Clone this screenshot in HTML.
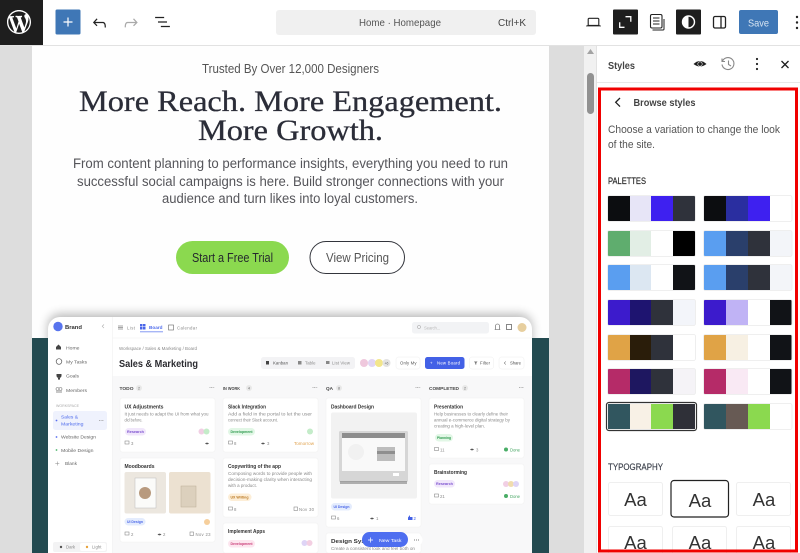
<!DOCTYPE html>
<html><head><meta charset="utf-8"><title>Browse styles</title>
<style>
html,body{margin:0;padding:0;background:#fff;overflow:hidden}
svg{display:block}
text{font-family:"Liberation Sans",sans-serif}
.serif{font-family:"Liberation Serif",serif}
.t{font-size:4.6px;fill:#666}
.d{font-size:4.3px;fill:#8a8a8a}
.b{font-size:5.4px;font-weight:bold;fill:#333}
.tag{font-size:3.8px;font-weight:bold}
.card{fill:#fff;stroke:#f0f0f0;stroke-width:.5}
</style></head><body>
<svg width="800" height="553" viewBox="0 0 800 553" xmlns="http://www.w3.org/2000/svg">
<defs>
<filter id="bl" x="-5%" y="-5%" width="110%" height="110%" color-interpolation-filters="sRGB"><feGaussianBlur stdDeviation="0.28"/></filter>
<filter id="sh" x="-10%" y="-10%" width="120%" height="120%" color-interpolation-filters="sRGB"><feGaussianBlur stdDeviation="5"/></filter>
<filter id="all" filterUnits="userSpaceOnUse" x="0" y="0" width="800" height="553" color-interpolation-filters="sRGB"><feGaussianBlur stdDeviation="0.3"/></filter>
</defs>
<rect width="800" height="553" fill="#fff"/>
<g filter="url(#all)">
<rect width="800" height="553" fill="#fff"/>
<!-- canvas -->
<rect x="0" y="46" width="584" height="507" fill="#dddddd"/>
<rect x="32" y="46" width="517" height="507" fill="#fefefe"/>
<rect x="32" y="338" width="517" height="215" fill="#234a50"/>

<!-- hero -->
<text x="202" y="73" textLength="177" lengthAdjust="spacingAndGlyphs" font-size="12.5" fill="#555">Trusted By Over 12,000 Designers</text>
<text class="serif" x="79" y="111" textLength="423" lengthAdjust="spacingAndGlyphs" font-size="29.5" fill="#2b2d38" stroke="#2b2d38" stroke-width=".3">More Reach. More Engagement.</text>
<text class="serif" x="198" y="140" textLength="185" lengthAdjust="spacingAndGlyphs" font-size="29.5" fill="#2b2d38" stroke="#2b2d38" stroke-width=".3">More Growth.</text>
<text x="73" y="168" textLength="435" lengthAdjust="spacingAndGlyphs" font-size="14.2" fill="#55555a">From content planning to performance insights, everything you need to run</text>
<text x="77" y="186" textLength="427" lengthAdjust="spacingAndGlyphs" font-size="14.2" fill="#55555a">successful social campaigns is here. Build stronger connections with your</text>
<text x="162" y="203" textLength="256" lengthAdjust="spacingAndGlyphs" font-size="14.2" fill="#55555a">audience and turn likes into loyal customers.</text>
<rect x="176" y="241" width="113" height="33" rx="16.5" fill="#8bd94f"/>
<text x="192" y="262" textLength="81" lengthAdjust="spacingAndGlyphs" font-size="12.5" fill="#25282e">Start a Free Trial</text>
<rect x="310" y="241.5" width="94.5" height="32" rx="16" fill="#fff" stroke="#33353c" stroke-width="1"/>
<text x="326" y="262" textLength="63" lengthAdjust="spacingAndGlyphs" font-size="12.5" fill="#555">View Pricing</text>

<!-- app -->
<rect x="48" y="317" width="484" height="260" rx="12" fill="#000" opacity=".28" filter="url(#sh)" transform="translate(0,-3)"/>
<rect x="32" y="338" width="16" height="215" fill="#234a50"/>
<rect x="532" y="338" width="17" height="215" fill="#234a50"/>
<g filter="url(#bl)">
<rect x="48" y="317" width="484" height="260" rx="12" fill="#fff"/>
<rect x="112.5" y="376" width="419.5" height="177" fill="#f8f8f9"/>
<path d="M112.5 317V553M112.5 338H532" stroke="#f0f0f0" stroke-width=".6"/>
<!-- app sidebar -->
<circle cx="58" cy="326.5" r="4.7" fill="#5874ee"/>
<text x="65" y="329" class="b" fill="#444" textLength="17" lengthAdjust="spacingAndGlyphs">Brand</text>
<path d="M104 324.5l-1.8 1.8 1.8 1.8" fill="none" stroke="#aaa" stroke-width=".6"/>
<path d="M56 347l2.5-2.5 2.5 2.5v2.5h-5z" fill="#444"/>
<text x="66" y="349.5" class="t" textLength="13.5" lengthAdjust="spacingAndGlyphs">Home</text>
<circle cx="59" cy="361.5" r="2.8" fill="none" stroke="#555" stroke-width=".7"/>
<text x="66" y="363.5" class="t" textLength="21" lengthAdjust="spacingAndGlyphs">My Tasks</text>
<path d="M56.5 374h5v2q-.5 2-2.5 2t-2.5-2z" fill="#444"/><rect x="58" y="378" width="2" height="1.6" fill="#444"/>
<text x="66" y="377.5" class="t" textLength="13" lengthAdjust="spacingAndGlyphs">Goals</text>
<circle cx="57.5" cy="389" r="1.5" fill="none" stroke="#777" stroke-width=".6"/><circle cx="60.5" cy="389" r="1.5" fill="none" stroke="#777" stroke-width=".6"/><path d="M56 392h6" stroke="#777" stroke-width=".8"/>
<text x="66" y="392" class="t" textLength="21" lengthAdjust="spacingAndGlyphs">Members</text>
<text x="56" y="407" font-size="3.3" fill="#aaa" textLength="23" lengthAdjust="spacingAndGlyphs">WORKSPACE</text>
<rect x="53" y="411" width="54" height="19" rx="2.5" fill="#eff2fd"/>
<circle cx="56.5" cy="420.5" r=".9" fill="#5a6ff0"/>
<text x="61" y="418.5" class="t" style="fill:#4f6cec" textLength="17" lengthAdjust="spacingAndGlyphs">Sales &amp;</text>
<text x="61" y="425.5" class="t" style="fill:#4f6cec" textLength="22.5" lengthAdjust="spacingAndGlyphs">Marketing</text>
<path d="M99 420.5h5" stroke="#999" stroke-width=".7" stroke-dasharray="1 .6"/>
<circle cx="56.5" cy="437" r=".9" fill="#5a6ff0"/>
<text x="61" y="438.5" class="t" textLength="35" lengthAdjust="spacingAndGlyphs">Website Design</text>
<circle cx="56.5" cy="450" r=".9" fill="#4bb56a"/>
<text x="61" y="452" class="t" textLength="32.5" lengthAdjust="spacingAndGlyphs">Mobile Design</text>
<path d="M57.3 461.5v4M55.3 463.5h4" stroke="#888" stroke-width=".5"/>
<text x="65" y="465" class="t" textLength="12" lengthAdjust="spacingAndGlyphs">Blank</text>
<rect x="53" y="542" width="54" height="10" rx="2" fill="#f3f3f4"/>
<rect x="80" y="543" width="26" height="8" rx="2" fill="#fff"/>
<circle cx="61" cy="547" r="1.2" fill="#555"/>
<text x="66" y="548.5" class="d" textLength="9">Dark</text>
<circle cx="87" cy="547" r="1.2" fill="#e8a33c"/>
<text x="92" y="548.5" class="d" textLength="9.5">Light</text>
<!-- tabs -->
<path d="M118 326h5M118 327.5h5M118 329h5" stroke="#888" stroke-width=".7"/>
<text x="127" y="329.5" class="d" textLength="8">List</text>
<rect x="140" y="324" width="5.5" height="5.5" fill="#4a66e8"/>
<path d="M142.7 324v5.5M140 326.7h5.5" stroke="#fff" stroke-width=".5"/>
<text x="149" y="329" class="t" style="fill:#4f6cec;font-weight:bold" textLength="13.5" lengthAdjust="spacingAndGlyphs">Board</text>
<rect x="140" y="331.5" width="23" height=".7" fill="#4f6cec"/>
<rect x="168.5" y="325" width="5" height="5" fill="none" stroke="#666" stroke-width=".6"/>
<text x="177" y="329.5" class="d" textLength="20">Calendar</text>
<!-- search -->
<rect x="412" y="322" width="77" height="11.5" rx="2.5" fill="#f2f3f5"/>
<circle cx="419" cy="327" r="1.6" fill="none" stroke="#999" stroke-width=".5"/>
<text x="424" y="329.5" class="d" style="fill:#bbb" textLength="16">Search...</text>
<path d="M495.5 329.5v-3.5a2 2 0 0 1 4 0v3.5zM494.7 329.5h5.6" fill="none" stroke="#555" stroke-width=".6"/>
<rect x="506.5" y="324.5" width="5" height="5" fill="none" stroke="#555" stroke-width=".7"/>
<circle cx="522" cy="327.5" r="4.5" fill="#e7cf9f"/>
<!-- page header -->
<text x="119" y="350" class="d" textLength="78" lengthAdjust="spacingAndGlyphs">Workspace / Sales &amp; Marketing / Board</text>
<text x="119" y="367" font-size="10" font-weight="bold" fill="#2b2b30" textLength="79" lengthAdjust="spacingAndGlyphs">Sales &amp; Marketing</text>
<rect x="261" y="357" width="94" height="12" rx="2.5" fill="#f3f3f5"/>
<rect x="266" y="361" width="3" height="3.5" fill="#444"/>
<text x="273" y="364.5" class="d" style="fill:#555" textLength="15">Kanban</text>
<rect x="298" y="361" width="3.5" height="3.5" fill="#888"/>
<text x="305" y="364.5" class="d" textLength="10.5">Table</text>
<rect x="326" y="361" width="3.5" height="3" fill="#888"/>
<text x="332" y="364.5" class="d" textLength="18">List View</text>
<circle cx="364" cy="363" r="4" fill="#efc8dd"/><circle cx="372" cy="363" r="4" fill="#e2d6f3"/><circle cx="379" cy="363" r="4" fill="#f3e68c"/><circle cx="386.5" cy="363" r="4" fill="#e3e3e3"/>
<text x="384.5" y="364.5" font-size="3.4" fill="#666">+6</text>
<rect x="396" y="357" width="24" height="12" rx="2.5" fill="#fff" stroke="#eee" stroke-width=".5"/>
<text x="400" y="364.5" class="d" style="fill:#555" textLength="16.5">Only My</text>
<rect x="425" y="357" width="39.5" height="12" rx="2.5" fill="#4361e6"/>
<text x="430" y="364.5" class="d" style="fill:#fff">+</text>
<text x="437" y="364.5" class="d" style="fill:#fff" textLength="23">New Board</text>
<rect x="469.5" y="357" width="24" height="12" rx="2.5" fill="#fff" stroke="#eee" stroke-width=".5"/>
<path d="M474 361.5h3.5l-1.2 1.5v1.5h-1.1V363z" fill="#777"/>
<text x="480" y="364.5" class="d" style="fill:#555" textLength="10">Filter</text>
<rect x="499" y="357" width="25" height="12" rx="2.5" fill="#fff" stroke="#eee" stroke-width=".5"/>
<path d="M506 361.5l-2 1.5 2 1.5" fill="none" stroke="#555" stroke-width=".5"/>
<text x="510" y="364.5" class="d" style="fill:#555" textLength="11">Share</text>
<!-- column headers -->
<text x="119.5" y="390" font-size="4.6" font-weight="bold" fill="#444" textLength="14" lengthAdjust="spacingAndGlyphs">TODO</text>
<circle cx="139" cy="388" r="3" fill="#e8e8e8"/><text x="138" y="389.5" font-size="3.6" fill="#666">2</text>
<path d="M209.5 387.5h5" stroke="#999" stroke-width=".7" stroke-dasharray="1 .6"/>
<text x="223" y="390" font-size="4.6" font-weight="bold" fill="#444" textLength="17" lengthAdjust="spacingAndGlyphs">IN WORK</text>
<circle cx="249" cy="388" r="3" fill="#e8e8e8"/><text x="248" y="389.5" font-size="3.6" fill="#666">4</text>
<path d="M312.5 387.5h5" stroke="#999" stroke-width=".7" stroke-dasharray="1 .6"/>
<text x="326" y="390" font-size="4.6" font-weight="bold" fill="#444" textLength="7" lengthAdjust="spacingAndGlyphs">QA</text>
<circle cx="339" cy="388" r="3" fill="#e8e8e8"/><text x="338" y="389.5" font-size="3.6" fill="#666">8</text>
<path d="M415.5 387.5h5" stroke="#999" stroke-width=".7" stroke-dasharray="1 .6"/>
<text x="429" y="390" font-size="4.6" font-weight="bold" fill="#444" textLength="30" lengthAdjust="spacingAndGlyphs">COMPLETED</text>
<circle cx="465" cy="388" r="3" fill="#e8e8e8"/><text x="464" y="389.5" font-size="3.6" fill="#666">2</text>
<path d="M519 387.5h5" stroke="#999" stroke-width=".7" stroke-dasharray="1 .6"/>

<!-- col 1 -->
<rect class="card" x="120" y="398" width="95" height="54" rx="2"/>
<text x="124.5" y="408.5" class="b" textLength="39" lengthAdjust="spacingAndGlyphs">UX Adjustments</text>
<text x="124.5" y="415.5" class="d" textLength="84" lengthAdjust="spacingAndGlyphs">It just needs to adapt the UI from what you</text>
<text x="124.5" y="421.5" class="d" textLength="18" lengthAdjust="spacingAndGlyphs">did before.</text>
<rect x="125" y="428" width="21" height="7.5" rx="3.7" fill="#f1e7fb"/>
<text x="127" y="433" class="tag" fill="#7b50cf" textLength="17" lengthAdjust="spacingAndGlyphs">Research</text>
<circle cx="201.5" cy="431.5" r="3" fill="#f1cfe4"/><circle cx="206.5" cy="431.5" r="3" fill="#c4ecc9"/>
<rect x="125" y="441" width="4" height="3" fill="none" stroke="#777" stroke-width=".5"/>
<text x="131" y="445" class="d">3</text>
<path d="M205 443.5q2-1.800 4 0q-2 1.800-4 0z" fill="#555"/>
<rect class="card" x="120" y="458" width="95" height="84" rx="2"/>
<text x="124.5" y="468" class="b" textLength="30" lengthAdjust="spacingAndGlyphs">Moodboards</text>
<rect x="124.5" y="472" width="41.5" height="41.5" rx="2" fill="#ece7df"/>
<rect x="135" y="478" width="21" height="30" fill="#fbfbf9" stroke="#bbb" stroke-width=".5"/>
<circle cx="145" cy="493" r="6" fill="#b89a7e"/>
<rect x="169" y="472" width="41.5" height="41.5" rx="2" fill="#ece1d1"/>
<rect x="181" y="486" width="15" height="21" fill="#dcd0bd" stroke="#bdae98" stroke-width=".5"/>
<rect x="124.5" y="518" width="21" height="7.5" rx="3.7" fill="#e4ecfd"/>
<text x="127" y="523" class="tag" fill="#4a66e8" textLength="16" lengthAdjust="spacingAndGlyphs">UI Design</text>
<circle cx="207" cy="522" r="3" fill="#f6cf9c"/>
<rect x="125" y="532" width="4" height="3" fill="none" stroke="#777" stroke-width=".5"/>
<text x="131" y="536" class="d">2</text>
<path d="M157.5 534.5q2-1.800 4 0q-2 1.800-4 0z" fill="#555"/><text x="163" y="536" class="d">2</text>
<rect x="190" y="532" width="3.5" height="3.5" fill="none" stroke="#777" stroke-width=".5"/>
<text x="195.5" y="536" class="d" textLength="15">Nov 23</text>

<!-- col 2 -->
<rect class="card" x="223" y="398" width="95" height="54" rx="2"/>
<text x="228" y="408.5" class="b" textLength="38" lengthAdjust="spacingAndGlyphs">Slack Integration</text>
<text x="228" y="415.5" class="d" textLength="84" lengthAdjust="spacingAndGlyphs">Add a field in the portal to let the user</text>
<text x="228" y="421.5" class="d" textLength="50" lengthAdjust="spacingAndGlyphs">connect their Slack account.</text>
<rect x="228" y="428" width="27" height="7.5" rx="3.7" fill="#e2f7e6"/>
<text x="230.5" y="433" class="tag" fill="#2f9a4f" textLength="22" lengthAdjust="spacingAndGlyphs">Development</text>
<circle cx="310" cy="431.5" r="3" fill="#c4ecc9"/>
<rect x="228.5" y="441" width="4" height="3" fill="none" stroke="#777" stroke-width=".5"/>
<text x="234" y="445" class="d">8</text>
<path d="M261 443.5q2-1.800 4 0q-2 1.800-4 0z" fill="#555"/><text x="267" y="445" class="d">3</text>
<text x="294" y="445" class="d" style="fill:#e0a24e" textLength="20" lengthAdjust="spacingAndGlyphs">Tomorrow</text>
<rect class="card" x="223" y="458" width="95" height="59" rx="2"/>
<text x="228" y="468" class="b" textLength="53" lengthAdjust="spacingAndGlyphs">Copywriting of the app</text>
<text x="228" y="475" class="d" textLength="84" lengthAdjust="spacingAndGlyphs">Composing words to provide people with</text>
<text x="228" y="481" class="d" textLength="84" lengthAdjust="spacingAndGlyphs">decision-making clarity when interacting</text>
<text x="228" y="487" class="d" textLength="29" lengthAdjust="spacingAndGlyphs">with a product.</text>
<rect x="228" y="493.5" width="23.5" height="7.5" rx="3.7" fill="#fdeed7"/>
<text x="230.5" y="498.5" class="tag" fill="#b9761f" textLength="18" lengthAdjust="spacingAndGlyphs">UX Writing</text>
<rect x="228.5" y="507" width="4" height="3" fill="none" stroke="#777" stroke-width=".5"/>
<text x="234" y="511" class="d">8</text>
<rect x="294" y="507" width="3.5" height="3.5" fill="none" stroke="#777" stroke-width=".5"/>
<text x="299" y="511" class="d" textLength="15">Nov 30</text>
<rect class="card" x="223" y="523" width="95" height="30" rx="2"/>
<text x="228" y="533" class="b" textLength="37" lengthAdjust="spacingAndGlyphs">Implement Apps</text>
<rect x="228" y="540" width="27" height="7.5" rx="3.7" fill="#fde6ef"/>
<text x="230.5" y="545" class="tag" fill="#c93d78" textLength="22" lengthAdjust="spacingAndGlyphs">Development</text>
<circle cx="304.5" cy="543" r="3" fill="#ded4f6"/><circle cx="309.5" cy="543" r="3" fill="#f3cfe2"/>

<!-- col 3 -->
<rect class="card" x="326" y="398" width="95" height="129" rx="2"/>
<text x="331" y="408.5" class="b" textLength="43" lengthAdjust="spacingAndGlyphs">Dashboard Design</text>
<rect x="331" y="412.5" width="86" height="86" rx="2" fill="#f2f2f2"/>
<rect x="339" y="431" width="69" height="51" rx="1.5" fill="#d6d6d6"/>
<rect x="342" y="433" width="63" height="5" fill="#8d8d8d"/>
<rect x="342" y="438" width="63" height="33" fill="#f9f9f9"/>
<circle cx="356" cy="452" r="8" fill="#f1f1f1"/>
<rect x="377" y="447" width="18" height="14" fill="#bdbdbd"/>
<rect x="377" y="451" width="18" height="3" fill="#8f8f8f"/>
<rect x="393" y="473" width="6" height="3" fill="#fff"/>
<rect x="340" y="481" width="67" height="3" fill="#777" opacity=".55"/>
<rect x="331" y="503" width="21" height="7.5" rx="3.7" fill="#e4ecfd"/>
<text x="333.5" y="508" class="tag" fill="#4a66e8" textLength="16" lengthAdjust="spacingAndGlyphs">UI Design</text>
<rect x="331.5" y="516" width="4" height="3" fill="none" stroke="#777" stroke-width=".5"/>
<text x="337" y="520" class="d">6</text>
<path d="M370 518.5q2-1.800 4 0q-2 1.800-4 0z" fill="#555"/><text x="376" y="520" class="d">1</text>
<path d="M408 517.5l2-2.5v2h2.5v3h-4.5z" fill="#4361e6"/>
<text x="413.5" y="520" class="d" style="fill:#4361e6">2</text>
<rect class="card" x="326" y="533" width="95" height="20" rx="2"/>
<text x="331" y="543" class="b" textLength="45" lengthAdjust="spacingAndGlyphs">Design System</text>
<text x="331" y="550" class="d" textLength="84" lengthAdjust="spacingAndGlyphs">Create a consistent look and feel both on</text>
<rect x="362" y="532" width="46" height="15" rx="7.5" fill="#4e6ef0"/>
<path d="M370.5 537.5v5M368 540h5" stroke="#fff" stroke-width=".7"/>
<text x="379" y="542" class="t" style="fill:#fff" textLength="22.5" lengthAdjust="spacingAndGlyphs">New Task</text>
<circle cx="416.5" cy="540" r="6" fill="#fff"/>
<path d="M414 540h5" stroke="#555" stroke-width=".8" stroke-dasharray="1 1"/>

<!-- col 4 -->
<rect class="card" x="429" y="398" width="95" height="60" rx="2"/>
<text x="434" y="408.5" class="b" textLength="29" lengthAdjust="spacingAndGlyphs">Presentation</text>
<text x="434" y="415.5" class="d" textLength="74" lengthAdjust="spacingAndGlyphs">Help businesses to clearly define their</text>
<text x="434" y="421.5" class="d" textLength="76" lengthAdjust="spacingAndGlyphs">annual e-commerce digital strategy by</text>
<text x="434" y="427.5" class="d" textLength="51" lengthAdjust="spacingAndGlyphs">creating a high-level plan.</text>
<rect x="435" y="434" width="18" height="7.5" rx="3.7" fill="#e2f7e6"/>
<text x="437" y="439" class="tag" fill="#2f9a4f" textLength="14" lengthAdjust="spacingAndGlyphs">Planning</text>
<rect x="434.5" y="447.5" width="4" height="3" fill="none" stroke="#777" stroke-width=".5"/>
<text x="440" y="451.5" class="d">11</text>
<path d="M470 449.5q2-1.800 4 0q-2 1.800-4 0z" fill="#555"/><text x="476" y="451.5" class="d">3</text>
<circle cx="506" cy="449.5" r="2" fill="#49ad66"/>
<text x="510" y="451.5" class="d" style="fill:#4aa866" textLength="10">Done</text>
<rect class="card" x="429" y="464" width="95" height="40" rx="2"/>
<text x="434" y="474" class="b" textLength="33" lengthAdjust="spacingAndGlyphs">Brainstorming</text>
<rect x="434" y="480" width="21" height="7.5" rx="3.7" fill="#f1e7fb"/>
<text x="436" y="485" class="tag" fill="#7b50cf" textLength="17" lengthAdjust="spacingAndGlyphs">Research</text>
<circle cx="506" cy="484" r="3" fill="#f1cfe4"/><circle cx="511" cy="484" r="3" fill="#f0dcae"/><circle cx="516" cy="484" r="3" fill="#ded4f6"/>
<rect x="434.5" y="494" width="4" height="3" fill="none" stroke="#777" stroke-width=".5"/>
<text x="440" y="498" class="d">21</text>
<circle cx="506" cy="496" r="2" fill="#49ad66"/>
<text x="510" y="498" class="d" style="fill:#4aa866" textLength="10">Done</text>
</g>

<!-- scrollbar -->
<rect x="584" y="46" width="13" height="507" fill="#f1f1f1"/>
<path d="M590.5 49l3.5 5h-7z" fill="#a3a3a3"/>
<rect x="587" y="73" width="7" height="41" rx="3.5" fill="#919191"/>

<!-- top bar -->
<rect x="0" y="0" width="800" height="45" fill="#fff"/>
<rect x="0" y="45" width="800" height="1" fill="#e2e2e2"/>
<rect x="0" y="0" width="43" height="45" fill="#1e1e1e"/>
<g transform="translate(7,10) scale(1.2)"><path fill="#fff" d="M20 10c0-5.510-4.490-10-10-10C4.480 0 0 4.490 0 10c0 5.520 4.480 10 10 10 5.510 0 10-4.480 10-10zM7.780 15.370L4.370 6.220c.55-.02 1.170-.08 1.170-.08.5-.06.44-1.130-.06-1.110 0 0-1.450.11-2.370.11-.18 0-.37 0-.58-.01C4.120 2.690 6.870 1.110 10 1.110c2.330 0 4.450.87 6.050 2.340-.68-.11-1.650.39-1.650 1.580 0 .74.45 1.360.9 2.100.35.61.55 1.360.55 2.460 0 1.490-1.400 5-1.400 5l-3.030-8.370c.54-.02.82-.17.82-.17.5-.05.44-1.250-.06-1.220 0 0-1.440.12-2.380.12-.87 0-2.330-.12-2.330-.12-.5-.03-.56 1.200-.06 1.220l.92.08 1.260 3.410zM17.410 10c.24-.64.74-1.870.43-4.250.7 1.290 1.050 2.710 1.050 4.250 0 3.290-1.730 6.240-4.400 7.780.97-2.590 1.940-5.200 2.920-7.780zM6.100 18.090C3.120 16.650 1.110 13.530 1.110 10c0-1.300.23-2.480.72-3.590C3.250 10.300 4.670 14.200 6.100 18.090zm4.030-6.630l2.580 6.980c-.86.29-1.760.45-2.710.45-.79 0-1.570-.11-2.290-.33.81-2.380 1.620-4.740 2.420-7.100z"/></g>
<rect x="55.5" y="9.5" width="25" height="25" rx="1.5" fill="#3f77b6"/>
<path d="M68 17.5v9M63.5 22h9" stroke="#fff" stroke-width="1.2"/>
<g transform="translate(99.5,22.5) scale(.82) translate(-12,-11.5)"><path fill="#222" d="M18.300 11.700c-.6-.6-1.400-.9-2.300-.9H6.700l2.900-3.300-1.100-1-4.500 5L8.500 16l1-1-2.700-2.700H16c.5 0 .9.2 1.300.5 1 1 1 3.400 1 4.500v.3h1.500v-.2c0-1.500 0-4.300-1.500-5.700z"/></g>
<g transform="translate(131,22.5) scale(.82) translate(-12,-11.5)"><path fill="#aaa" d="M15.600 6.500l-1.100 1 2.900 3.300H8c-.9 0-1.700.3-2.300.9-1.400 1.500-1.400 4.200-1.400 5.600v.2h1.500v-.3c0-1.100 0-3.500 1-4.500.3-.3.7-.5 1.300-.5h9.200L14.500 15l1.100 1.100 4.600-4.600-4.600-5z"/></g>
<g transform="translate(162.5,22) scale(.82) translate(-12,-12.25)"><path fill="#222" d="M3 6h11v1.500H3V6zm3.500 5.500h11V13h-11v-1.500zM21 17H10v1.500h11V17z"/></g>
<rect x="276" y="10" width="260" height="25" rx="3" fill="#f0f0f0"/>
<text x="359" y="26" textLength="82" lengthAdjust="spacingAndGlyphs" font-size="10.5" fill="#555">Home · Homepage</text>
<text x="498" y="26" textLength="28" lengthAdjust="spacingAndGlyphs" font-size="10.5" fill="#444">Ctrl+K</text>
<g transform="translate(593.5,22) scale(.75) translate(-12,-11.75)"><path fill="#222" d="M20.500 16h-.7V8c0-1.100-.9-2-2-2H6.200c-1.100 0-2 .9-2 2v8h-.7c-.8 0-1.500.7-1.500 1.500h20c0-.8-.7-1.500-1.500-1.500zM5.700 8c0-.3.2-.5.5-.5h11.600c.3 0 .5.2.5.5v7.600H5.700V8z"/></g>
<rect x="613" y="9.5" width="25" height="25" rx="1" fill="#1e1e1e"/>
<path d="M625.5 16.700h5.300v5M624.500 27.300h-4.800v-5" fill="none" stroke="#fff" stroke-width="1.300"/>
<g fill="none" stroke="#222" stroke-width="1.100"><rect x="650.5" y="14.5" width="11.5" height="13.5" rx="1.5"/><path d="M653 18h6.500M653 21h6.500M653 24h6.500"/><path d="M664 19v10a1 1 0 0 1-1 1h-10.500" stroke-width="1"/></g>
<rect x="676" y="9.5" width="25" height="25" rx="1" fill="#1e1e1e"/>
<circle cx="688.5" cy="22" r="6" fill="#1e1e1e" stroke="#fff" stroke-width="1.4"/>
<path d="M688.5 16a6 6 0 0 0 0 12z" fill="#fff"/>
<rect x="713.5" y="16.5" width="12" height="11.5" rx="1.5" fill="none" stroke="#222" stroke-width="1.3"/>
<path d="M721 16.500V28" stroke="#222" stroke-width="1.3"/>
<rect x="739" y="10" width="39" height="24" rx="2" fill="#3f77b6"/>
<text x="748" y="26.500" textLength="21" lengthAdjust="spacingAndGlyphs" font-size="10.5" fill="#d9e6f3">Save</text>
<circle cx="797" cy="17" r="1.2" fill="#222"/><circle cx="797" cy="22.5" r="1.2" fill="#222"/><circle cx="797" cy="28" r="1.2" fill="#222"/>

<!-- sidebar -->
<rect x="596" y="46" width="204" height="507" fill="#fff"/>
<rect x="596" y="46" width="1" height="507" fill="#e2e2e2"/>
<rect x="597" y="82" width="203" height="1" fill="#e8e8e8"/>
<text x="608" y="69" textLength="27" lengthAdjust="spacingAndGlyphs" font-size="10.5" font-weight="bold" fill="#444">Styles</text>
<path d="M693.5 64q6.500-6 13 0q-6.500 5-13 0z" fill="#1e1e1e"/><circle cx="700" cy="64" r="2.2" fill="#1e1e1e" stroke="#fff" stroke-width=".6"/>
<path d="M722.500 61a6 6 0 1 1-.5 3.500M722 58.500v3h3M728.500 60.500v4l2.500 1.500" fill="none" stroke="#888" stroke-width="1.1"/>
<circle cx="757" cy="59" r="1.1" fill="#222"/><circle cx="757" cy="64" r="1.1" fill="#222"/><circle cx="757" cy="69" r="1.1" fill="#222"/>
<path d="M781.500 61l7 7M788.500 61l-7 7" stroke="#1e1e1e" stroke-width="1.3"/>
<path d="M620 98l-4.300 4.300 4.300 4.300" fill="none" stroke="#1e1e1e" stroke-width="1.3"/>
<text x="633.5" y="106" textLength="62" lengthAdjust="spacingAndGlyphs" font-size="10.5" font-weight="bold" fill="#444">Browse styles</text>
<text x="608" y="133" textLength="172" lengthAdjust="spacingAndGlyphs" font-size="10.7" fill="#555">Choose a variation to change the look</text>
<text x="608" y="148" textLength="47" lengthAdjust="spacingAndGlyphs" font-size="10.7" fill="#555">of the site.</text>
<text x="608" y="184" textLength="38" lengthAdjust="spacingAndGlyphs" font-size="9" fill="#222" stroke="#222" stroke-width=".15">PALETTES</text>

<!-- palettes -->
<g stroke="none">
<rect x="608" y="196" width="22" height="25" fill="#0c0d10"/><rect x="630" y="196" width="21" height="25" fill="#e7e5f7"/><rect x="651" y="196" width="22" height="25" fill="#3e20f0"/><rect x="673" y="196" width="22" height="25" fill="#2f323b"/>
<rect x="704" y="196" width="22" height="25" fill="#0c0d10"/><rect x="726" y="196" width="22" height="25" fill="#2a2ea0"/><rect x="748" y="196" width="22" height="25" fill="#3e20f0"/><rect x="770" y="196" width="21.5" height="25" fill="#fff"/>

<rect x="608" y="231" width="22" height="25" fill="#5fad6e"/><rect x="630" y="231" width="21" height="25" fill="#e2eee5"/><rect x="651" y="231" width="22" height="25" fill="#fff"/><rect x="673" y="231" width="22" height="25" fill="#000"/>
<rect x="704" y="231" width="22" height="25" fill="#5a9ef0"/><rect x="726" y="231" width="22" height="25" fill="#2a3f6b"/><rect x="748" y="231" width="22" height="25" fill="#2f323b"/><rect x="770" y="231" width="21.5" height="25" fill="#f3f5f9"/>

<rect x="608" y="265" width="22" height="25" fill="#5a9ef0"/><rect x="630" y="265" width="21" height="25" fill="#dce7f2"/><rect x="651" y="265" width="22" height="25" fill="#fff"/><rect x="673" y="265" width="22" height="25" fill="#111317"/>
<rect x="704" y="265" width="22" height="25" fill="#5a9ef0"/><rect x="726" y="265" width="22" height="25" fill="#2a3f6b"/><rect x="748" y="265" width="22" height="25" fill="#2f323b"/><rect x="770" y="265" width="21.5" height="25" fill="#f3f5f9"/>

<rect x="608" y="300" width="22" height="25" fill="#3c1bcc"/><rect x="630" y="300" width="21" height="25" fill="#1e1470"/><rect x="651" y="300" width="22" height="25" fill="#2f323b"/><rect x="673" y="300" width="22" height="25" fill="#f3f5fa"/>
<rect x="704" y="300" width="22" height="25" fill="#3c1bcc"/><rect x="726" y="300" width="22" height="25" fill="#c0b3f5"/><rect x="748" y="300" width="22" height="25" fill="#fff"/><rect x="770" y="300" width="21.5" height="25" fill="#111317"/>

<rect x="608" y="335" width="22" height="25" fill="#e0a346"/><rect x="630" y="335" width="21" height="25" fill="#2a1d0a"/><rect x="651" y="335" width="22" height="25" fill="#2f323b"/><rect x="673" y="335" width="22" height="25" fill="#fff"/>
<rect x="704" y="335" width="22" height="25" fill="#e0a346"/><rect x="726" y="335" width="22" height="25" fill="#f7f0e3"/><rect x="748" y="335" width="22" height="25" fill="#fff"/><rect x="770" y="335" width="21.5" height="25" fill="#111317"/>

<rect x="608" y="369" width="22" height="25" fill="#b52b68"/><rect x="630" y="369" width="21" height="25" fill="#1e1760"/><rect x="651" y="369" width="22" height="25" fill="#2f323b"/><rect x="673" y="369" width="22" height="25" fill="#f5f3f7"/>
<rect x="704" y="369" width="22" height="25" fill="#b52b68"/><rect x="726" y="369" width="22" height="25" fill="#f9e9f4"/><rect x="748" y="369" width="22" height="25" fill="#fff"/><rect x="770" y="369" width="21.5" height="25" fill="#111317"/>

<rect x="608" y="404" width="22" height="25" fill="#31565f"/><rect x="630" y="404" width="21" height="25" fill="#f8f1e6"/><rect x="651" y="404" width="22" height="25" fill="#8bd94f"/><rect x="673" y="404" width="22" height="25" fill="#2f3038"/>
<rect x="704" y="404" width="22" height="25" fill="#31565f"/><rect x="726" y="404" width="22" height="25" fill="#675a54"/><rect x="748" y="404" width="22" height="25" fill="#8bd94f"/><rect x="770" y="404" width="21.5" height="25" fill="#fff"/>
</g>
<g fill="none" stroke="#eaeaea" stroke-width=".8">
<rect x="607.5" y="195.5" width="88" height="26" rx="2"/><rect x="703.5" y="195.5" width="88.5" height="26" rx="2"/>
<rect x="607.5" y="230.5" width="88" height="26" rx="2"/><rect x="703.5" y="230.5" width="88.5" height="26" rx="2"/>
<rect x="607.5" y="264.5" width="88" height="26" rx="2"/><rect x="703.5" y="264.5" width="88.5" height="26" rx="2"/>
<rect x="607.5" y="299.5" width="88" height="26" rx="2"/><rect x="703.5" y="299.5" width="88.5" height="26" rx="2"/>
<rect x="607.5" y="334.5" width="88" height="26" rx="2"/><rect x="703.5" y="334.5" width="88.5" height="26" rx="2"/>
<rect x="607.5" y="368.5" width="88" height="26" rx="2"/><rect x="703.5" y="368.5" width="88.5" height="26" rx="2"/>
<rect x="703.5" y="403.5" width="88.5" height="26" rx="2"/>
</g>
<rect x="606.5" y="402.5" width="90" height="28" rx="2.5" fill="none" stroke="#333" stroke-width="1.2"/>

<!-- typography -->
<text x="608" y="470" textLength="55" lengthAdjust="spacingAndGlyphs" font-size="9" fill="#3a3f4a" stroke="#3a3f4a" stroke-width=".15">TYPOGRAPHY</text>
<g fill="#fff" stroke="#efefef" stroke-width="1">
<rect x="608.5" y="482.5" width="54" height="33" rx="2"/>
<rect x="736.5" y="482.5" width="54" height="33" rx="2"/>
<rect x="608.5" y="526.5" width="54" height="33" rx="2"/>
<rect x="672.5" y="526.5" width="54" height="33" rx="2"/>
<rect x="736.5" y="526.5" width="54" height="33" rx="2"/>
</g>
<rect x="671" y="480.5" width="57.5" height="36.5" rx="3" fill="#fff" stroke="#222" stroke-width="1.2"/>
<g font-size="18.5" fill="#333" text-anchor="middle">
<text x="635.5" y="506">Aa</text><text x="700" y="507">Aa</text><text x="764" y="506">Aa</text>
<text x="635.5" y="549">Aa</text><text x="700" y="549">Aa</text><text x="764" y="549">Aa</text>
</g>

<!-- red outline -->
<rect x="599.5" y="89" width="197" height="462" fill="none" stroke="#f00000" stroke-width="3"/>
</g>
</svg>
</body></html>
